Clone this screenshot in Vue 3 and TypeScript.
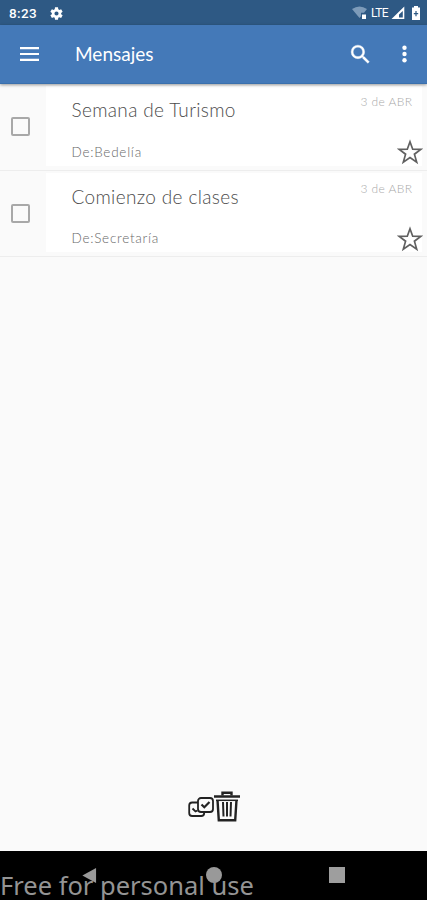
<script setup lang="ts">
import { ref } from 'vue'

interface Message {
  id: number
  title: string
  sender: string
  date: string
}

const messages = ref<Message[]>([
  { id: 1, title: 'Semana de Turismo', sender: 'Bedelía', date: '3 de ABR' },
  { id: 2, title: 'Comienzo de clases', sender: 'Secretaría', date: '3 de ABR' },
])
</script>

<template>
  <div class="screen">
    <div class="status">
      <span class="clock">8:23</span>
      <svg class="gear" viewBox="0 0 24 24"><path fill="#fff" fill-rule="evenodd" d="M19.4 13a7.500 7.500 0 0 0 0-2l2.400-1.800-2.400-4.200-2.900 1.200a7 7 0 0 0-1.700-1L14.400 2H9.600l-.4 3.200a7 7 0 0 0-1.700 1L4.600 5 2.200 9.200 4.600 11a7.500 7.500 0 0 0 0 2l-2.400 1.800L4.600 19l2.900-1.200a7 7 0 0 0 1.700 1l.4 3.200h4.800l.4-3.200a7 7 0 0 0 1.700-1l2.900 1.200 2.400-4.200zM12 8.700a3.300 3.300 0 1 1 0 6.600 3.300 3.300 0 0 1 0-6.600z"/></svg>
      <svg class="wifi" viewBox="0 0 16 14"><path fill="#7d9bb9" d="M0 3Q7.500-2 15 3L12 6.800H9v3.500L7.500 12z"/><path fill="#fff" d="M10 8.500h4V13h-4z"/></svg>
      <span class="lte">LTE</span>
      <svg class="signal" viewBox="0 0 14 14"><path fill="#fff" fill-rule="evenodd" d="M13.300.5V13H.5zM11.800 5v6.500H8V8.500z"/></svg>
      <svg class="battery" viewBox="0 0 10 14"><path fill="#fff" d="M3 0h4v1.500h2V14H1V1.500h2z"/><path fill="#2e5984" d="M4.400 5h1.200v2h1.600v1.300H5.600v2H4.400v-2H2.800V7h1.600z"/></svg>
    </div>

    <header class="toolbar">
      <svg class="menu" viewBox="0 0 20 16"><path fill="#fff" d="M0 .7h20v2.200H0zM0 6.900h20v2.200H0zM0 13.100h20v2.200H0z"/></svg>
      <h1>Mensajes</h1>
      <svg class="search" viewBox="0 0 24 24"><path fill="#fff" stroke="#fff" stroke-width=".35" d="M15.500 14h-.79l-.28-.27A6.470 6.470 0 0 0 16 9.500 6.500 6.500 0 1 0 9.500 16c1.610 0 3.090-.59 4.230-1.570l.27.28v.79l5 4.990L20.490 19l-4.990-5zm-6 0C7.010 14 5 11.990 5 9.500S7.010 5 9.500 5 14 7.010 14 9.500 11.990 14 9.500 14z"/></svg>
      <svg class="more" viewBox="0 0 6 18"><g fill="#fff"><circle cx="3" cy="2.800" r="2.200"/><circle cx="3" cy="9" r="2.200"/><circle cx="3" cy="15.200" r="2.200"/></g></svg>
    </header>

    <main class="list">
      <article v-for="m in messages" :key="m.id" class="row">
        <div class="select"><span class="box" /></div>
        <div class="card">
          <div class="text">
            <h2>{{ m.title }}</h2>
            <p>De:{{ m.sender }}</p>
          </div>
          <div class="side">
            <time>{{ m.date }}</time>
            <svg class="star" viewBox="0 0 26 26"><path fill="#fff" stroke="#606060" stroke-width="1.700" d="M13 2.800l2.700 7.400 8.100.2-6.400 4.800 2.300 7.900L13 18.500l-6.700 4.600 2.300-7.900-6.400-4.800 8.100-.2z"/></svg>
          </div>
        </div>
      </article>
    </main>

    <div class="actions">
      <svg class="checks" viewBox="0 0 26 22"><g fill="#fafafa" stroke="#222" stroke-width="1.800"><rect x="1.200" y="6.500" width="15" height="13.500" rx="3"/><path fill="none" d="M4.500 12.500l3 3 2-1"/><rect x="10" y="2" width="15" height="14" rx="3"/><path fill="none" stroke-width="2.200" d="M13.500 8.500l2.800 2.700L21.500 6"/></g></svg>
      <svg class="trash" viewBox="0 0 26 32"><g fill="none" stroke="#222"><path stroke-width="2.500" d="M0 5.500h26"/><path stroke-width="2.400" d="M8.500 4.500V1.800h9v2.700M3.500 9l1.300 20.300h16.400L22.500 9"/><path stroke-width="2" d="M9 11l.5 14.500M13 11v14.500M17 11l-.5 14.500"/><path stroke-width="1.500" d="M2 9.300h22"/></g></svg>
    </div>

    <footer class="nav">
      <svg class="back" viewBox="0 0 16 18"><path fill="#999" d="M15.500 1v16L1 9z"/></svg>
      <span class="home" />
      <span class="recent" />
      <span class="mark">Free for personal use</span>
    </footer>
  </div>
</template>

<style>
body {
  margin: 0;
}
</style>

<style scoped>
.screen {
  display: flex;
  flex-direction: column;
  width: 427px;
  height: 900px;
  overflow: hidden;
  background: #fafafa;
  font-family: Lato, "Liberation Sans", sans-serif;
}
svg {
  display: block;
  flex: none;
}
h1, h2, p {
  margin: 0;
  white-space: nowrap;
}
.status {
  display: flex;
  align-items: center;
  box-sizing: border-box;
  height: 25px;
  padding: 1px 6px 0 9px;
  background: #2e5984;
  color: #fff;
  font-family: Roboto, sans-serif;
}
.clock {
  width: 40px;
  font-size: 13.500px;
  font-weight: 500;
  letter-spacing: 0.400px;
}
.gear {
  width: 15px;
  height: 15px;
}
.wifi {
  width: 16px;
  height: 14px;
  margin-left: auto;
}
.lte {
  width: 20px;
  margin-left: 3px;
  font-size: 12px;
  letter-spacing: -0.6px;
}
.signal {
  width: 14px;
  height: 14px;
}
.battery {
  width: 10px;
  height: 14px;
  margin-left: 6px;
}
.toolbar {
  display: flex;
  align-items: center;
  position: relative;
  box-sizing: border-box;
  height: 59px;
  padding: 0 19px 1px 20px;
  border-bottom: 1px solid #3a70ad;
  background: #4479b8;
  box-shadow: 0 1px 3px rgba(0, 0, 0, 0.4);
  color: #fff;
}
.menu {
  width: 19px;
  height: 16px;
}
h1 {
  margin: 0 auto 0 36px;
  font-size: 19px;
  font-weight: 400;
  line-height: 24px;
}
.search {
  width: 25px;
  height: 25px;
  margin-top: 1px;
  margin-right: 28px;
}
.more {
  width: 7px;
  height: 18px;
  margin-top: 1px;
}
.row {
  display: flex;
  box-sizing: border-box;
  height: 86.500px;
  padding: 2px 5px 4px 0;
  border-bottom: 1px solid #ededed;
}
.select {
  display: flex;
  align-items: center;
  width: 46px;
  padding-left: 11px;
  box-sizing: border-box;
}
.box {
  box-sizing: border-box;
  width: 19px;
  height: 19px;
  margin-top: 2px;
  border: 2px solid #a8a8a8;
  border-radius: 2px;
}
.card {
  display: flex;
  flex: 1;
  justify-content: space-between;
  background: #fff;
}
.text {
  padding: 12px 0 0 25.500px;
}
h2 {
  color: #4c4c4c;
  font-size: 19px;
  font-weight: 300;
  line-height: 24px;
  letter-spacing: 0.350px;
}
p {
  margin-top: 20.500px;
  color: #686868;
  font-size: 13.500px;
  font-weight: 300;
  line-height: 18px;
  letter-spacing: 0.750px;
}
.side {
  display: flex;
  flex-direction: column;
  justify-content: space-between;
  align-items: flex-end;
}
time {
  margin: 8px 9.600px 0 0;
  color: #a8a8a8;
  font-size: 12px;
  font-weight: 300;
  line-height: 16px;
  letter-spacing: 0.400px;
}
.star {
  width: 26px;
  height: 26px;
  margin-right: -1px;
  margin-bottom: 0.500px;
}
.actions {
  display: flex;
  align-items: center;
  justify-content: center;
  height: 32px;
  margin-top: auto;
  margin-bottom: 28px;
}
.checks {
  width: 26px;
  height: 22px;
}
.trash {
  width: 26px;
  height: 32px;
}
.nav {
  position: relative;
  display: flex;
  box-sizing: border-box;
  height: 49px;
  padding: 16px 0 0 81px;
  background: #000;
}
.back {
  width: 16px;
  height: 17px;
}
.home {
  width: 16px;
  height: 16px;
  margin-left: 109px;
  border-radius: 50%;
  background: #999;
}
.recent {
  width: 16px;
  height: 16px;
  margin-left: 107px;
  background: #9e9e9e;
}
.mark {
  position: absolute;
  left: 0;
  top: 20px;
  color: #949494;
  font-family: "Noto Sans", "DejaVu Sans", sans-serif;
  font-size: 25.500px;
  line-height: 29px;
  white-space: nowrap;
}
</style>
